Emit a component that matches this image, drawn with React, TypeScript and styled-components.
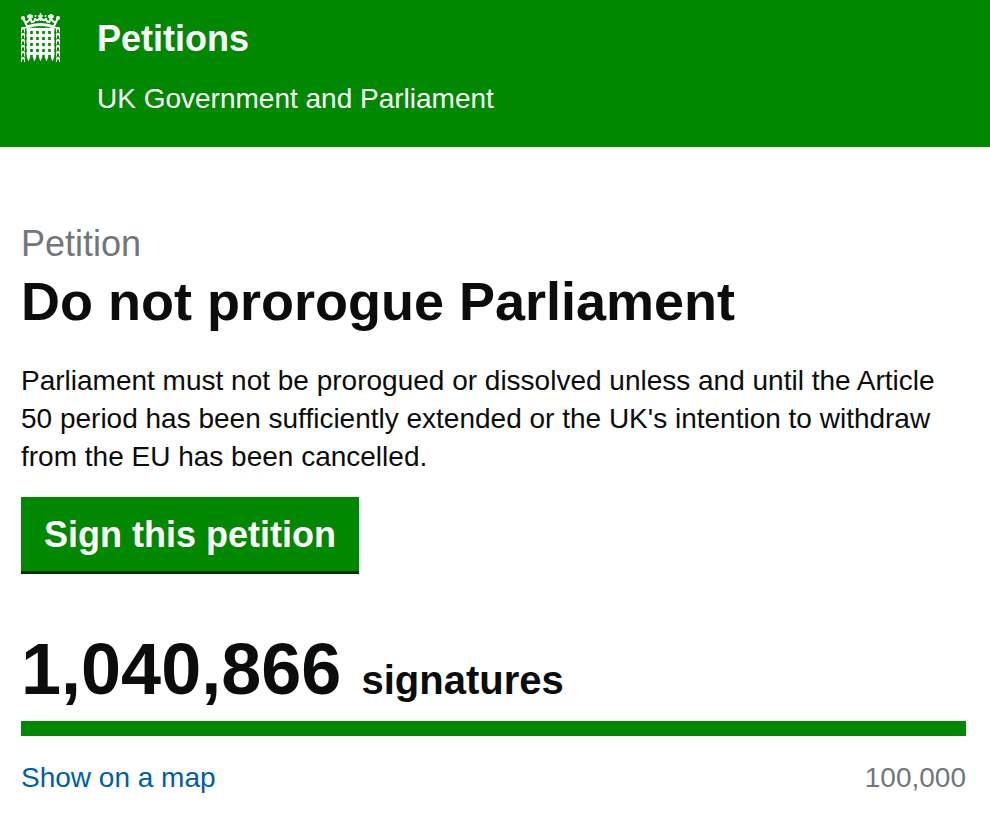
import React from 'react';
import styled, { createGlobalStyle } from 'styled-components';

const Global = createGlobalStyle`
  *, *::before, *::after { box-sizing: border-box; }
  body { margin: 0; background: #fff; color: #0b0c0c; font-family: "Liberation Sans", Arial, sans-serif; font-size: 28px; line-height: 38px; }
`;
const Header = styled.header`
  display: flex; align-items: flex-start; gap: 36px;
  padding: 13px 21px 29px 20px;
  background: #008800; color: #fff;
`;
const Crest = styled.svg` width: 41px; height: 49px; flex: none; `;
const SiteTitle = styled.a`
  display: block; color: inherit; text-decoration: none;
  font-size: 36px; line-height: 52px; font-weight: 700;
`;
const Tagline = styled.p` margin: 15px 0 0; `;
const Main = styled.main` padding: 75px 24px 24px 21px; `;
const Heading = styled.h1` margin: 0; font-size: 54px; line-height: 70px; font-weight: 700; `;
const Kicker = styled.span` display: block; color: #6f777b; font-size: 36px; line-height: 44px; font-weight: 400; `;
const Lead = styled.p` margin: 26px 0 21px; `;
const SignButton = styled.button`
  display: block; border: 0; padding: 17px 23px 18px;
  background: #008800; color: #fff; box-shadow: inset 0 -3px 0 #003300;
  font: 700 36px/42px "Liberation Sans", Arial, sans-serif; cursor: pointer;
`;
const Count = styled.p` margin: 59px 0 5px; font-size: 40px; line-height: 72px; font-weight: 700; `;
const Total = styled.span` font-size: 72px; margin-right: 9px; `;
const Track = styled.div` height: 15px; background: #dee0e2; `;
const Bar = styled.div` height: 100%; background: #008800; `;
const Row = styled.div` display: flex; justify-content: space-between; margin-top: 23px; `;
const MapLink = styled.a` color: #005ea5; text-decoration: none; `;
const Goal = styled.span` color: #6f777b; `;

const signatures = 1040866;
const threshold = 100000;

const columns = [8, 14, 20, 26, 32];
const rails = [16, 22, 28, 34, 40];

function Portcullis() {
  return (
    <Crest viewBox="0 0 41 49" aria-hidden="true" fill="none" stroke="#fff">
      <path d="M7 14Q20.500 9 34 14" strokeWidth="3" />
      <path d="M7 13 3 5M34 13 38 5M4 8Q8 11 10 5M37 8Q33 11 31 5M10 4 12 10M31 4 29 10M12 9Q15 9 15 5M29 9Q26 9 26 5M15 6Q18 9 20.500 4Q23 9 26 6" strokeWidth="2" />
      <path d="M20.500 0V8M18 3H23M8 2V5M12 2V5M29 2V5M33 2V5" strokeWidth="1.500" />
      <g fill="#fff" stroke="none">
        <circle cx="3" cy="5" r="2" /><circle cx="10" cy="3" r="2" /><circle cx="15.500" cy="3" r="1" />
        <circle cx="25.500" cy="3" r="1" /><circle cx="31" cy="3" r="2" /><circle cx="38" cy="5" r="2" />
      </g>
      {rails.map((y) => <path key={y} d={`M6.500 ${y + 0.5}H34.500`} strokeWidth="3" />)}
      {columns.map((x) => (
        <path key={x} d={`M${x - 1} 15H${x + 2}V44L${x + 0.5} 48 ${x - 1} 44Z`} fill="#fff" strokeWidth="0.4" />
      ))}
      <path d="M1.500 15V49M4.500 15V49M36.500 15V49M39.500 15V49" strokeWidth="1" strokeDasharray="4.500 1.500" />
      <path d="M3 14V49M38 14V49" strokeWidth="3" strokeDasharray="2.500 3.500" />
      <path d="M7 14 2 16M34 14 39 16" strokeWidth="1.500" />
    </Crest>
  );
}

export default function App() {
  return (
    <>
      <Global />
      <Header>
        <Portcullis />
        <div>
          <SiteTitle href="#">Petitions</SiteTitle>
          <Tagline>UK Government and Parliament</Tagline>
        </div>
      </Header>
      <Main>
        <Heading><Kicker>Petition</Kicker>Do not prorogue Parliament</Heading>
        <Lead>Parliament must not be prorogued or dissolved unless and until the Article 50 period has been sufficiently extended or the UK's intention to withdraw from the EU has been cancelled.</Lead>
        <SignButton type="button">Sign this petition</SignButton>
        <Count><Total>{signatures.toLocaleString('en-GB')}</Total> signatures</Count>
        <Track role="progressbar" aria-label="Signatures" aria-valuenow={Math.min(signatures, threshold)} aria-valuemax={threshold}>
          <Bar style={{ width: `${Math.min(100, (signatures / threshold) * 100)}%` }} />
        </Track>
        <Row><MapLink href="#map">Show on a map</MapLink><Goal>{threshold.toLocaleString('en-GB')}</Goal></Row>
      </Main>
    </>
  );
}
